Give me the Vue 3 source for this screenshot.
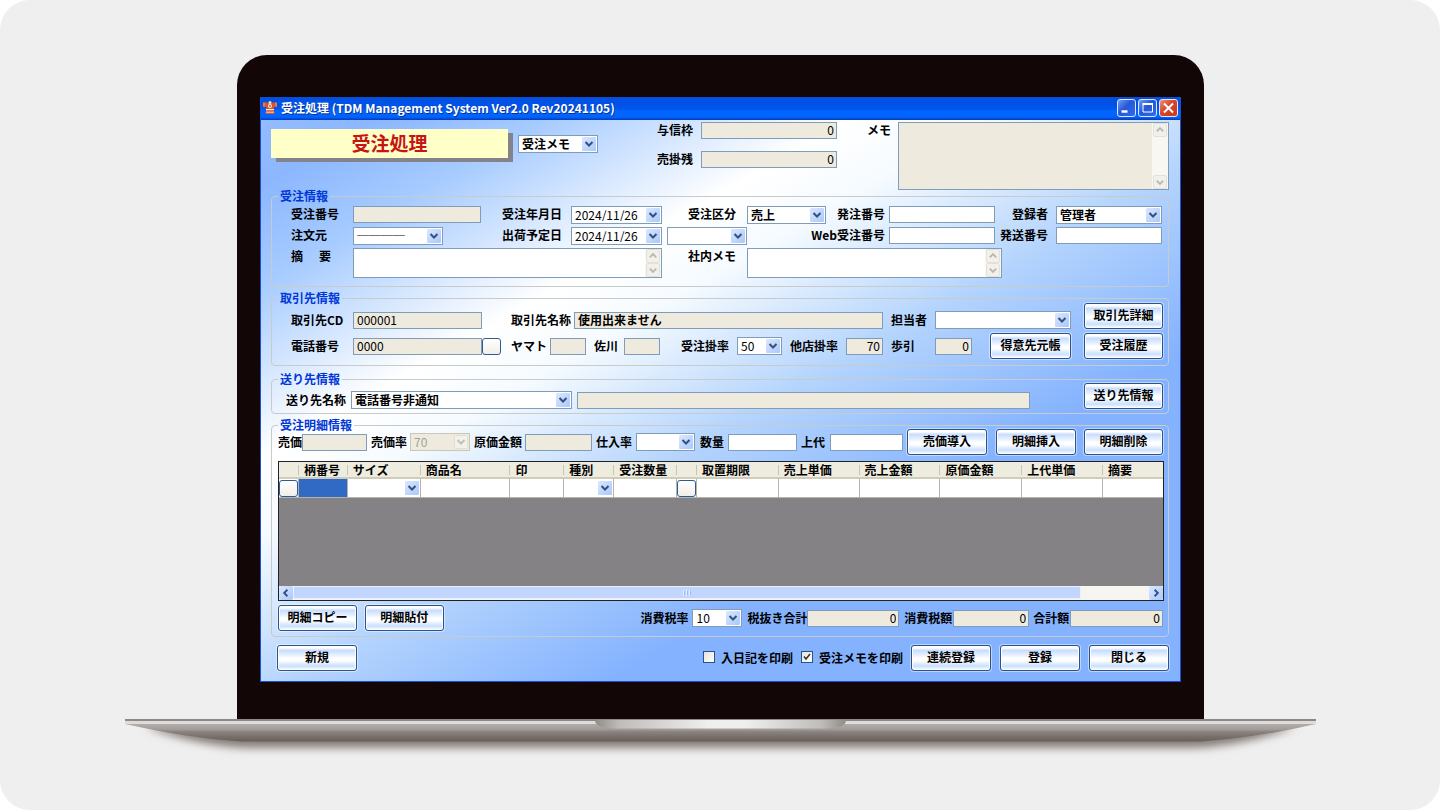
<script setup>
import { ref } from 'vue'

const columns = [
  { label: '', width: 20, kind: 'tick' },
  { label: '柄番号', width: 49, kind: 'selected' },
  { label: 'サイズ', width: 73, kind: 'drop' },
  { label: '商品名', width: 90 },
  { label: '印', width: 54 },
  { label: '種別', width: 50, kind: 'drop' },
  { label: '受注数量', width: 63 },
  { label: '', width: 20, kind: 'tick' },
  { label: '取置期限', width: 82 },
  { label: '売上単価', width: 81 },
  { label: '売上金額', width: 81 },
  { label: '原価金額', width: 82 },
  { label: '上代単価', width: 81 },
  { label: '摘要', width: 60 },
]
const total = columns.reduce((sum, c) => sum + c.width, 0)
const printDiary = ref(false)
const printMemo = ref(true)
</script>

<template>
  <main class="page">
    <svg class="defs" aria-hidden="true">
      <defs>
        <linearGradient id="dropFill" x1="0" y1="0" x2="1" y2="1">
          <stop offset="0" stop-color="#dbe8ff" /><stop offset="1" stop-color="#a9c8fb" />
        </linearGradient>
        <symbol id="drop" viewBox="0 0 14 14">
          <rect width="14" height="14" rx="1" fill="url(#dropFill)" />
          <path d="M3.500 5l3.500 3.500L10.500 5" fill="none" stroke="#33507f" stroke-width="2" />
        </symbol>
        <symbol id="dropOff" viewBox="0 0 14 14">
          <rect x=".5" y=".5" width="13" height="13" rx="1" fill="#f3f2ea" stroke="#e2dfd2" />
          <path d="M3.500 5l3.500 3.500L10.500 5" fill="none" stroke="#c3c1b6" stroke-width="2" />
        </symbol>
      </defs>
    </svg>

    <div class="lid">
      <div class="window">
        <header class="titlebar">
          <svg class="appicon" viewBox="0 0 14 14" aria-hidden="true">
            <path d="M0 1.500h4l3 1 3-1h4v4.500h-3v2H3V6H0z" fill="#d8542f" />
            <path d="M1 1.500v4M13 1.500v4" stroke="#f3a070" />
            <circle cx="7" cy="1.500" r="1.500" fill="#f7d9a8" />
            <circle cx="7" cy="5" r="2" fill="#fff0e0" />
            <path d="M6 5h2M7 4v2" stroke="#c8371c" stroke-width=".8" />
            <path d="M3 8h8v1.500H3z" fill="#ffe9d0" /><path d="M3 9.500h8l.5 3.500h-9z" fill="#d8542f" />
            <path d="M3 11.200h8" stroke="#ffd2b0" />
          </svg>
          <h1>受注処理 (TDM Management System Ver2.0 Rev20241105)</h1>
          <div class="winbtns">
            <button class="wbtn" type="button" aria-label="最小化">
              <svg viewBox="0 0 17 16"><path d="M3.500 11.500h6" stroke="#fff" stroke-width="2.500" /></svg>
            </button>
            <button class="wbtn" type="button" aria-label="最大化">
              <svg viewBox="0 0 17 16"><path d="M4 4.500h9.500V12H4z" fill="none" stroke="#fff" /><path d="M3.500 4h10.500" stroke="#fff" stroke-width="2" /></svg>
            </button>
            <button class="wbtn close" type="button" aria-label="閉じる">
              <svg viewBox="0 0 17 16"><path d="M4 3.500l9 9M13 3.500l-9 9" stroke="#fff" stroke-width="2" /></svg>
            </button>
          </div>
        </header>

        <form class="client" @submit.prevent>
          <div class="head">
            <h2 class="banner">受注処理</h2>
            <div class="combo kind">
              <select aria-label="メモ種別"><option>受注メモ</option></select>
              <svg><use href="#drop" /></svg>
            </div>
            <div class="credit">
              <label for="credit">与信枠</label><input id="credit" class="num" readonly value="0">
              <label for="balance">売掛残</label><input id="balance" class="num" readonly value="0">
            </div>
            <label class="memolabel" for="memo">メモ</label>
            <div class="area tall">
              <textarea id="memo" readonly></textarea>
              <div class="scroll">
                <button type="button" aria-label="上へ"><svg viewBox="0 0 13 13"><path d="M3 8l3.500-3.500L10 8" /></svg></button>
                <button type="button" aria-label="下へ"><svg viewBox="0 0 13 13"><path d="M3 5l3.500 3.500L10 5" /></svg></button>
              </div>
            </div>
          </div>

          <fieldset class="order">
            <legend>受注情報</legend>
            <div class="grid">
              <label class="at1" for="ono">受注番号</label><input id="ono" class="at2 span2" readonly>
              <label class="at5" for="odate">受注年月日</label>
              <div class="combo at6"><select id="odate"><option>2024/11/26</option></select><svg><use href="#drop" /></svg></div>
              <label class="at9" for="otype">受注区分</label>
              <div class="combo at10"><select id="otype"><option>売上</option></select><svg><use href="#drop" /></svg></div>
              <label class="at11 right" for="hno">発注番号</label><input id="hno" class="at12">
              <label class="at13 right wide" for="staff">登録者</label>
              <div class="combo at14"><select id="staff"><option>管理者</option></select><svg><use href="#drop" /></svg></div>

              <label class="at1" for="src">注文元</label>
              <div class="combo at2"><select id="src"><option>────</option></select><svg><use href="#drop" /></svg></div>
              <label class="at5" for="sdate">出荷予定日</label>
              <div class="combo at6"><select id="sdate"><option>2024/11/26</option></select><svg><use href="#drop" /></svg></div>
              <div class="combo at8 span2"><select aria-label="時間帯"><option></option></select><svg><use href="#drop" /></svg></div>
              <label class="at10 span2 right" for="web">Web受注番号</label><input id="web" class="at12">
              <label class="at13 right wide" for="ship">発送番号</label><input id="ship" class="at14">

              <label class="at1 spread" for="note"><span>摘</span><span>要</span></label>
              <div class="area at2 span5">
                <textarea id="note"></textarea>
                <div class="scroll">
                  <button type="button" aria-label="上へ"><svg viewBox="0 0 13 13"><path d="M3 8l3.500-3.500L10 8" /></svg></button>
                  <button type="button" aria-label="下へ"><svg viewBox="0 0 13 13"><path d="M3 5l3.500 3.500L10 5" /></svg></button>
                </div>
              </div>
              <label class="at9" for="inner">社内メモ</label>
              <div class="area at10 innermemo">
                <textarea id="inner"></textarea>
                <div class="scroll">
                  <button type="button" aria-label="上へ"><svg viewBox="0 0 13 13"><path d="M3 8l3.500-3.500L10 8" /></svg></button>
                  <button type="button" aria-label="下へ"><svg viewBox="0 0 13 13"><path d="M3 5l3.500 3.500L10 5" /></svg></button>
                </div>
              </div>
            </div>
          </fieldset>

          <fieldset class="client-info">
            <legend>取引先情報</legend>
            <div class="grid low">
              <label class="at1" for="cd">取引先CD</label><input id="cd" class="at2" readonly value="000001">
              <label class="at5 span2" for="cname">取引先名称</label><input id="cname" class="at7 span10 jp" readonly value="使用出来ません">
              <label class="at18" for="rep">担当者</label>
              <div class="combo at19 span3"><select id="rep"><option></option></select><svg><use href="#drop" /></svg></div>
              <button class="btn at23" type="button">取引先詳細</button>
            </div>
            <div class="grid">
              <label class="at1" for="tel">電話番号</label><input id="tel" class="at2" readonly value="0000">
              <button class="mini at3" type="button" aria-label="検索"></button>
              <label class="at5" for="yamato">ヤマト</label><input id="yamato" class="at6 span2" readonly>
              <label class="at9" for="sagawa">佐川</label><input id="sagawa" class="at10" readonly>
              <label class="at12" for="rate1">受注掛率</label>
              <div class="combo at13"><select id="rate1"><option>50</option></select><svg><use href="#drop" /></svg></div>
              <label class="at15" for="rate2">他店掛率</label><input id="rate2" class="at16 num" readonly value="70">
              <label class="at18" for="disc">歩引</label><input id="disc" class="at19 num" readonly value="0">
              <button class="btn at21" type="button">得意先元帳</button>
              <button class="btn at23" type="button">受注履歴</button>
            </div>
          </fieldset>

          <fieldset class="dest">
            <legend>送り先情報</legend>
            <div class="grid low">
              <label class="at1" for="dname">送り先名称</label>
              <div class="combo at2"><select id="dname"><option>電話番号非通知</option></select><svg><use href="#drop" /></svg></div>
              <input class="at4" aria-label="送り先" readonly>
              <button class="btn at6" type="button">送り先情報</button>
            </div>
          </fieldset>

          <fieldset class="detail">
            <legend>受注明細情報</legend>
            <div class="grid tools">
              <label class="at1" for="p1">売価</label><input id="p1" class="at2" readonly>
              <label class="at4" for="p2">売価率</label>
              <div class="combo off at5"><select id="p2" disabled><option>70</option></select><svg><use href="#dropOff" /></svg></div>
              <label class="at7" for="p3">原価金額</label><input id="p3" class="at8" readonly>
              <label class="at10" for="p4">仕入率</label>
              <div class="combo at11"><select id="p4"><option></option></select><svg><use href="#drop" /></svg></div>
              <label class="at13" for="p5">数量</label><input id="p5" class="at14">
              <label class="at16" for="p6">上代</label><input id="p6" class="at17">
              <button class="btn at19" type="button">売価導入</button>
              <button class="btn at21" type="button">明細挿入</button>
              <button class="btn at23" type="button">明細削除</button>
            </div>

            <div class="sheet">
              <table>
                <colgroup><col v-for="(c, i) in columns" :key="i" :style="{ width: (c.width / total) * 100 + '%' }"></colgroup>
                <thead><tr><th v-for="(c, i) in columns" :key="i" scope="col">{{ c.label }}</th></tr></thead>
                <tbody>
                  <tr>
                    <td v-for="(c, i) in columns" :key="i" :class="c.kind">
                      <button v-if="c.kind === 'tick'" class="mini" type="button" aria-label="行選択"></button>
                      <div v-else-if="c.kind === 'drop'" class="combo cell">
                        <select :aria-label="c.label"><option></option></select><svg><use href="#drop" /></svg>
                      </div>
                    </td>
                  </tr>
                </tbody>
              </table>
              <div class="hscroll">
                <button type="button" aria-label="左へ"><svg viewBox="0 0 13 13"><path d="M8 3L4.500 6.500 8 10" /></svg></button>
                <div class="track"><div class="thumb"><i></i><i></i><i></i></div></div>
                <button type="button" aria-label="右へ"><svg viewBox="0 0 13 13"><path d="M5 3l3.500 3.500L5 10" /></svg></button>
              </div>
            </div>

            <div class="grid sums">
              <button class="btn at1" type="button">明細コピー</button>
              <button class="btn at3" type="button">明細貼付</button>
              <label class="at5" for="tax">消費税率</label>
              <div class="combo at6"><select id="tax"><option>10</option></select><svg><use href="#drop" /></svg></div>
              <label class="at8" for="net">税抜き合計</label><input id="net" class="at9 num" readonly value="0">
              <label class="at11" for="taxsum">消費税額</label><input id="taxsum" class="at12 num" readonly value="0">
              <label class="at14" for="sum">合計額</label><input id="sum" class="at15 num" readonly value="0">
            </div>
          </fieldset>

          <footer class="foot">
            <button class="btn first" type="button">新規</button>
            <label class="check">
              <span class="box"><input v-model="printDiary" type="checkbox"></span>入日記を印刷
            </label>
            <label class="check">
              <span class="box"><input v-model="printMemo" type="checkbox">
                <svg v-if="printMemo" viewBox="0 0 12 12"><path d="M3 5.500l2 2.500 4-5" fill="none" stroke="#333" stroke-width="1.500" /></svg>
              </span>受注メモを印刷
            </label>
            <div class="actions">
              <button class="btn" type="button">連続登録</button>
              <button class="btn" type="button">登録</button>
              <button class="btn" type="button">閉じる</button>
            </div>
          </footer>
        </form>
      </div>
    </div>

    <svg class="base" viewBox="0 0 1191 44" preserveAspectRatio="none" aria-hidden="true">
      <defs>
        <linearGradient id="metal" x1="0" y1="0" x2="0" y2="23" gradientUnits="userSpaceOnUse">
          <stop offset="0" stop-color="#8d8785" /><stop offset=".08" stop-color="#8d8785" />
          <stop offset=".1" stop-color="#dedcda" /><stop offset=".2" stop-color="#dedcda" />
          <stop offset=".24" stop-color="#b0aba8" /><stop offset=".45" stop-color="#a39d9a" />
          <stop offset=".55" stop-color="#8b8380" /><stop offset="1" stop-color="#665b57" />
        </linearGradient>
        <linearGradient id="notch">
          <stop offset="0" stop-color="#918b88" /><stop offset=".1" stop-color="#bfbdba" />
          <stop offset=".45" stop-color="#efefee" /><stop offset=".6" stop-color="#efefee" />
          <stop offset=".9" stop-color="#bfbdba" /><stop offset="1" stop-color="#918b88" />
        </linearGradient>
        <filter id="soft" filterUnits="userSpaceOnUse" x="-20" y="-20" width="1231" height="80"><feGaussianBlur stdDeviation="4" /></filter>
      </defs>
      <path d="M20 8Q80 29 130 29H1061Q1111 29 1171 8z" fill="#857d77" filter="url(#soft)" />
      <path d="M0 0H1191V5Q1130 19 1075 22.500H116Q61 19 0 5z" fill="url(#metal)" />
      <path d="M470 1H721Q721 9.500 700 9.500H491Q470 9.500 470 1z" fill="url(#notch)" />
    </svg>
  </main>
</template>

<style>
html, body { background: #fff; }
</style>

<style scoped>
.page {
  min-height: 100vh;
  box-sizing: border-box;
  padding: 55px 0 32px;
  overflow: hidden;
  border-radius: 30px;
  background: #efefef;
  color: #000;
  font: bold 12px/15px "Noto Sans CJK JP", sans-serif;
}
.page *, .page *::before { box-sizing: border-box; }
.defs { position: absolute; width: 0; height: 0; }
.lid {
  margin: 0 236px 0 237px;
  min-width: 860px;
  padding: 42px 23px 37px;
  border-radius: 30px 30px 0 0;
  background: #130606;
}
.base { display: block; width: calc(100% - 249px); min-width: 1100px; height: 44px; margin: 0 124px 0 125px; overflow: visible; }

.window { border: 1px solid #1c50d8; border-top: 0; background: #86b3ff; }
.titlebar {
  display: flex;
  align-items: center;
  height: 23px;
  padding: 0 2px 0 2px;
  border-bottom: 1px solid #0a3fc4;
  background: linear-gradient(#0d4fd6, #0050e4 12%, #0054ea 50%, #0066ff 65%, #0064fb 92%, #0048d0);
}
.appicon { width: 14px; height: 14px; flex: none; }
.titlebar h1 { flex: 1; margin: 0 0 0 4px; color: #fff; font: bold 12px/20px "Noto Sans CJK JP", sans-serif; text-shadow: 1px 1px 0 #0a3191; white-space: nowrap; }
.winbtns { display: flex; gap: 2px; }
.wbtn {
  display: block;
  width: 19px;
  height: 18px;
  padding: 0;
  border: 1px solid #dce8ff;
  border-radius: 3px;
  background: linear-gradient(135deg, #6f9bf5, #2558d8 45%, #2c6cf0);
}
.wbtn svg { display: block; width: 17px; height: 16px; }
.wbtn.close { background: linear-gradient(135deg, #ee9277, #d8442a 45%, #c93a1c); }

.client {
  padding: 2px 11px 10px 10px;
  background: linear-gradient(150deg, #94bcff, #8cb7ff 6%, #a6cbff 15%, #ffffff 31%, #f6fbff 38%, #b4d4fd 53%, #84b2ff 70%);
}
label { display: block; padding-bottom: 2px; white-space: nowrap; }
h2 { margin: 0; }

input, textarea, select {
  width: 100%;
  min-width: 0;
  height: 17px;
  margin: 0;
  padding: 0 3px 2px;
  border: 1px solid #7f9db9;
  border-radius: 0;
  outline: 0;
  background: #fff;
  color: #000;
  font: 12px/15px "Noto Sans CJK JP", sans-serif;
}
input[readonly], textarea[readonly] { background: #eeeade; }
input.num { padding: 0 2px 2px; text-align: right; }
input.jp { font-weight: bold; }
.combo { display: grid; height: 18px; min-width: 0; border: 1px solid #7f9db9; background: #fff; }
.combo select { grid-area: 1 / 1; height: 16px; border: 0; appearance: none; background: transparent; }
.combo svg { grid-area: 1 / 1; justify-self: end; align-self: center; width: 14px; height: 14px; margin-right: 1px; pointer-events: none; }
.combo.off { border-color: #c9c7ba; background: #eeeade; }
.combo.off select { color: #a5a294; opacity: 1; }
.kind select, #otype, #staff, #dname, #src { font-weight: bold; }

.area { display: flex; min-width: 0; height: 30px; border: 1px solid #7f9db9; background: #fff; }
.area.tall { height: 68px; background: #eeeade; }
.area textarea { flex: 1; height: auto; border: 0; resize: none; }
.scroll { display: flex; flex-direction: column; justify-content: space-between; width: 16px; padding: 0 1px; background: #f8f7f2; }
.scroll button, .hscroll button { display: block; width: 14px; height: 14px; padding: 0; border: 1px solid #e4e2d8; border-radius: 2px; background: #f1f0ea; }
.scroll svg, .hscroll svg { display: block; width: 12px; height: 12px; fill: none; stroke: #bbb9ae; stroke-width: 2; }

.btn {
  height: 26px;
  padding: 0 0 2px;
  border: 1px solid #2a5389;
  border-radius: 3px;
  box-shadow: inset 0 0 0 1px #fff, 0 0 0 1px rgba(255, 255, 255, .45);
  background: linear-gradient(#fff 8%, #c8ddff 18%, #ecf4ff 42%, #fff 50%, #fff 60%, #c9e0ff 84%, #fff);
  color: #000;
  font: bold 12px/20px "Noto Sans CJK JP", sans-serif;
  white-space: nowrap;
}
.mini { display: block; width: 100%; height: 17px; padding: 0; border: 1px solid #2f5b94; border-radius: 3px; background: linear-gradient(#fff, #f1efe9); }

.head {
  display: grid;
  grid-template-columns: 237fr 10fr 80fr 59fr 180fr 30fr 31fr 271fr;
  align-items: start;
}
.banner {
  height: 29px;
  margin-top: 7px;
  box-shadow: 5px 4px 0 #85838a;
  background: #ffffc8;
  color: #c81414;
  font: bold 19px/28px "Noto Sans CJK JP", sans-serif;
  text-align: center;
}
.kind { grid-column: 3; margin-top: 13px; }
.credit { grid-column: 5; display: grid; grid-template-columns: 44fr 136fr; row-gap: 12px; }
.memolabel { grid-column: 7; }
.head .area { grid-column: 8; }

fieldset { min-width: 0; margin: 0; padding: 0; border: 1px solid #c7ccca; border-radius: 4px; }
legend { margin-left: 6px; padding: 0 2px; color: #0038d8; line-height: 6px; }
.grid { display: grid; align-items: center; }
.grid.low > :not(.btn) { align-self: end; }

.order { margin-top: 3px; padding: 7px 0 8px; }
.order .grid { padding: 0 6px 0 19px; grid-template-columns: 62fr 90fr 38fr 21fr 69fr 91fr 5fr 21fr 59fr 79fr 63fr 106fr 61fr 106fr; grid-template-rows: 17px 17px 30px; row-gap: 4px; align-items: start; }
.innermemo { grid-column-end: 13; margin-right: -7px; }
.right { padding-right: 4px; text-align: right; }
.right.wide { padding-right: 8px; }
.spread { display: flex; gap: 16px; }

.client-info { margin-top: 8px; padding: 2px 0 6px; }
.client-info .grid { padding: 0 5px 0 19px; grid-template-columns: 62fr 129fr 19fr 10fr 39fr 24fr 12fr 8fr 30fr 36fr 21fr 56fr 45fr 8fr 56fr 37fr 8fr 44fr 37fr 18fr 81fr 13fr 79fr; }
.client-info .grid + .grid { margin-top: 4px; }

.dest { margin-top: 10px; padding: 0 0 4px; }
.dest .grid { padding: 0 5px 0 14px; grid-template-columns: 65fr 221fr 5fr 453fr 54fr 79fr; height: 27px; }

.detail { margin-top: 8px; padding: 1px 0 5px; }
.detail .grid { padding: 0 5px 0 6px; }
.tools { grid-template-columns: 24fr 65fr 4fr 39fr 60fr 4fr 51fr 67fr 4fr 40fr 59fr 5fr 28fr 69fr 4fr 29fr 73fr 4fr 80fr 9fr 80fr 8fr 79fr; }
.sums { grid-template-columns: 79fr 8fr 79fr 197fr 52fr 50fr 5fr 59fr 92fr 5fr 49fr 76fr 4fr 37fr 93fr; }

.sheet { display: flex; flex-direction: column; height: 140px; margin: 6px 4px 4px 6px; border: 1px solid #222; background: #848284; }
table { width: 100%; table-layout: fixed; border-collapse: separate; border-spacing: 0; }
th { position: relative; height: 17px; padding: 0 0 0 5px; border-bottom: 2px solid #d0ccbc; background: #eeebdf; font: bold 12px/15px "Noto Sans CJK JP", sans-serif; text-align: left; white-space: nowrap; }
th + th::before { content: ""; position: absolute; left: -1px; top: 3px; width: 1px; height: 10px; background: #c9c5b4; }
td { height: 19px; padding: 0; border-right: 1px solid #b5b3aa; border-bottom: 1px solid #b5b3aa; background: #fff; }
td:last-child { border-right: 0; }
td.selected { background: #316ac5; }
.combo.cell { border: 0; }
.hscroll { display: flex; height: 14px; margin-top: auto; background: #f6f5f0; }
.hscroll button { border: 0; background: linear-gradient(135deg, #dbe8ff, #a9c8fb); }
.hscroll svg { margin: 0 auto; stroke: #33507f; }
.track { flex: 1; }
.thumb { display: flex; align-items: center; justify-content: center; gap: 1px; width: 92%; height: 13px; border: 1px solid #e8f0ff; border-radius: 2px; background: #c2d5fc; }
.thumb i { width: 2px; height: 6px; border: 1px solid #e6efff; border-right-color: #9db9ec; }

.foot { display: flex; align-items: center; margin-top: 8px; padding-left: 6px; }
.foot .btn { width: 80px; }
.first { margin-right: auto; }
.check { display: flex; align-items: center; gap: 6px; margin-right: 8px; }
.box { display: grid; width: 12px; height: 12px; }
.box input { grid-area: 1 / 1; width: 12px; height: 12px; padding: 0; appearance: none; border-color: #2a5484; background: linear-gradient(135deg, #e4e2dc, #fff); }
.box svg { grid-area: 1 / 1; width: 12px; height: 12px; pointer-events: none; }
.actions { display: flex; gap: 9px; }

.at1 { grid-column-start: 1; }
.at2 { grid-column-start: 2; }
.at3 { grid-column-start: 3; }
.at4 { grid-column-start: 4; }
.at5 { grid-column-start: 5; }
.at6 { grid-column-start: 6; }
.at7 { grid-column-start: 7; }
.at8 { grid-column-start: 8; }
.at9 { grid-column-start: 9; }
.at10 { grid-column-start: 10; }
.at11 { grid-column-start: 11; }
.at12 { grid-column-start: 12; }
.at13 { grid-column-start: 13; }
.at14 { grid-column-start: 14; }
.at15 { grid-column-start: 15; }
.at16 { grid-column-start: 16; }
.at17 { grid-column-start: 17; }
.at18 { grid-column-start: 18; }
.at19 { grid-column-start: 19; }
.at21 { grid-column-start: 21; }
.at23 { grid-column-start: 23; }
.span2 { grid-column-end: span 2; }
.span3 { grid-column-end: span 3; }
.span5 { grid-column-end: span 5; }
.span10 { grid-column-end: span 10; }
</style>
